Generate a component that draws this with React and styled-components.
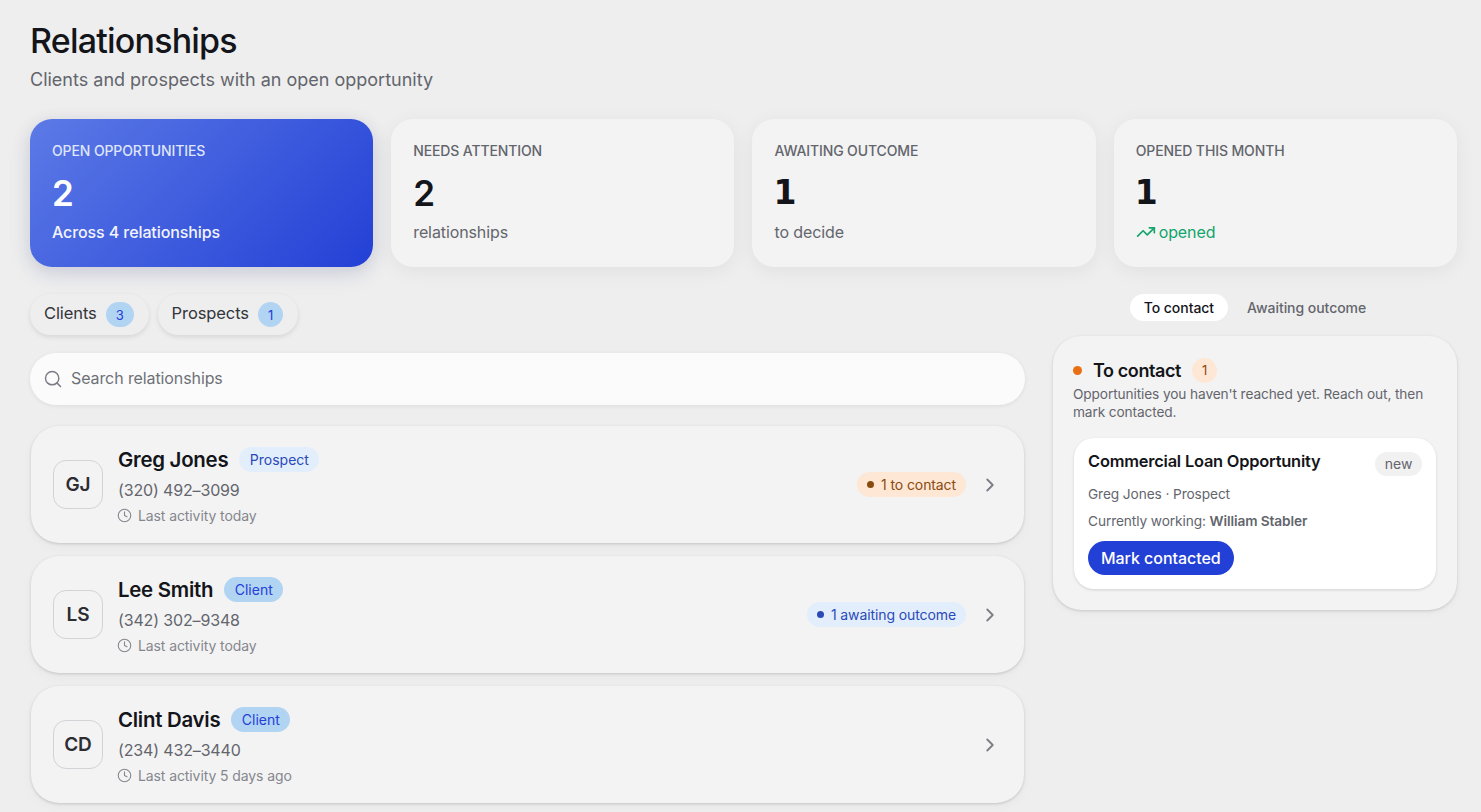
import React from 'react';
import styled, { createGlobalStyle } from 'styled-components';
import { Search, Clock, ChevronRight, TrendingUp } from 'lucide-react';

const summary = [
  { label: 'OPEN OPPORTUNITIES', value: '2', note: 'Across 4 relationships', primary: true },
  { label: 'NEEDS ATTENTION', value: '2', note: 'relationships' },
  { label: 'AWAITING OUTCOME', value: '1', note: 'to decide' },
  { label: 'OPENED THIS MONTH', value: '1', note: 'opened', trend: true },
];

const people = [
  { initials: 'GJ', name: 'Greg Jones', kind: 'Prospect', phone: '(320) 492–3099', activity: 'Last activity today', status: '1 to contact', tone: 'orange' },
  { initials: 'LS', name: 'Lee Smith', kind: 'Client', phone: '(342) 302–9348', activity: 'Last activity today', status: '1 awaiting outcome', tone: 'blue' },
  { initials: 'CD', name: 'Clint Davis', kind: 'Client', phone: '(234) 432–3440', activity: 'Last activity 5 days ago' },
];

const App = () => (
  <Page>
    <GlobalStyle />
    <Title>Relationships</Title>
    <Subtitle>Clients and prospects with an open opportunity</Subtitle>

    <SummaryGrid>
      {summary.map((item) => (
        <SummaryCard key={item.label} $primary={item.primary}>
          <SummaryLabel $primary={item.primary}>{item.label}</SummaryLabel>
          <SummaryValue $primary={item.primary} $footed={item.value === '1'}>{item.value}</SummaryValue>
          <SummaryNote $primary={item.primary} $trend={item.trend}>
            {item.trend && <TrendingUp size={20} strokeWidth={2} />}
            {item.note}
          </SummaryNote>
        </SummaryCard>
      ))}
    </SummaryGrid>

    <Columns>
      <LeftColumn>
        <FilterRow>
          <FilterPill><FilterLabel>Clients</FilterLabel><FilterCount>3</FilterCount></FilterPill>
          <FilterPill><FilterLabel>Prospects</FilterLabel><FilterCount>1</FilterCount></FilterPill>
        </FilterRow>
        <SearchBar>
          <Search size={20} strokeWidth={1.75} color="#7b7d85" />
          <SearchInput placeholder="Search relationships" />
        </SearchBar>
        <RowList>
          {people.map((person) => (
            <PersonRow key={person.name}>
              <Avatar>{person.initials}</Avatar>
              <PersonInfo>
                <NameLine>
                  <PersonName>{person.name}</PersonName>
                  <KindChip $client={person.kind === 'Client'}>{person.kind}</KindChip>
                </NameLine>
                <Phone>{person.phone}</Phone>
                <Activity>
                  <Clock size={15} strokeWidth={1.75} />
                  {person.activity}
                </Activity>
              </PersonInfo>
              {person.status && (
                <StatusChip $tone={person.tone}>
                  <StatusDot $tone={person.tone} />
                  {person.status}
                </StatusChip>
              )}
              <RowChevron><ChevronRight size={22} strokeWidth={2} /></RowChevron>
            </PersonRow>
          ))}
        </RowList>
      </LeftColumn>

      <RightColumn>
        <TabRow>
          <Tab $active>To contact</Tab>
          <Tab>Awaiting outcome</Tab>
        </TabRow>
        <Panel>
          <PanelHeader>
            <PanelDot />
            <PanelTitle>To contact</PanelTitle>
            <PanelCount>1</PanelCount>
          </PanelHeader>
          <PanelText>Opportunities you haven't reached yet. Reach out, then mark contacted.</PanelText>
          <OpportunityCard>
            <OpportunityTop>
              <OpportunityTitle>Commercial Loan Opportunity</OpportunityTitle>
              <NewChip>new</NewChip>
            </OpportunityTop>
            <OpportunityMeta>Greg Jones · Prospect</OpportunityMeta>
            <OpportunityMeta>Currently working: <strong>William Stabler</strong></OpportunityMeta>
            <MarkButton>Mark contacted</MarkButton>
          </OpportunityCard>
        </Panel>
      </RightColumn>
    </Columns>
  </Page>
);

const GlobalStyle = createGlobalStyle`
  * { box-sizing: border-box; }
  html, body { margin: 0; height: 100%; overflow: hidden; background: #eeeeee; }
  body { font-family: Inter, "Liberation Sans", sans-serif; color: #14151a; }
`;

const Page = styled.div`
  padding: 21px 24.1px 0 30px;
`;

const Title = styled.h1`
  margin: 0;
  font-size: 34px;
  line-height: 39px;
  font-weight: 500;
  letter-spacing: -0.8px;
  color: #14151a;
`;

const Subtitle = styled.p`
  margin: 8px 0 0;
  font-size: 18px;
  line-height: 24px;
  color: #63656d;
`;

const SummaryGrid = styled.div`
  display: grid;
  grid-template-columns: repeat(4, 1fr);
  gap: 18px;
  margin-top: 27px;
`;

const SummaryCard = styled.div`
  height: 148px;
  padding: 23px 22px;
  border-radius: 22px;
  background: ${(p) => (p.$primary ? 'linear-gradient(135deg, #5c7ae6 0%, #2340d6 100%)' : '#f3f3f3')};
  box-shadow: ${(p) => (p.$primary ? '0 8px 24px rgba(35, 64, 214, 0.08), 0 4px 18px rgba(0, 0, 0, 0.1)' : '0 4px 20px rgba(0, 0, 0, 0.06)')};
`;

const SummaryLabel = styled.div`
  font-size: 14px;
  line-height: 18px;
  font-weight: 500;
  letter-spacing: -0.12px;
  color: ${(p) => (p.$primary ? '#dfe5fb' : '#63656d')};
`;

const SummaryValue = styled.div`
  margin-top: 12px;
  margin-left: ${(p) => (p.$footed ? '-1px' : '0')};
  font-family: ${(p) => (p.$footed ? '"DejaVu Sans", sans-serif' : 'inherit')};
  font-size: ${(p) => (p.$footed ? '33px' : '35px')};
  line-height: 42px;
  font-weight: ${(p) => (p.$footed ? 700 : 600)};
  color: ${(p) => (p.$primary ? '#ffffff' : '#14151a')};
`;

const SummaryNote = styled.div`
  display: flex;
  align-items: center;
  gap: 3px;
  margin-top: 7px;
  font-size: 16px;
  line-height: 22px;
  font-weight: ${(p) => (p.$primary ? 500 : 400)};
  letter-spacing: -0.1px;
  color: ${(p) => (p.$primary ? '#f2f4fe' : p.$trend ? '#12a56c' : '#63656d')};
`;

const Columns = styled.div`
  display: grid;
  grid-template-columns: 995px 1fr;
  gap: 28px;
  margin-top: 27px;
  align-items: start;
`;

const LeftColumn = styled.div`
  display: flex;
  flex-direction: column;
`;

const FilterRow = styled.div`
  display: flex;
  gap: 9px;
`;

const FilterPill = styled.div`
  display: flex;
  align-items: center;
  gap: 9px;
  height: 41px;
  padding: 0 15px 0 14px;
  border-radius: 21px;
  background: #eeeeee;
  font-size: 16.5px;
  letter-spacing: -0.1px;
  color: #33353b;
  box-shadow: 0 2px 5px rgba(0, 0, 0, 0.1);
`;

const FilterLabel = styled.span`
  padding-bottom: 3px;
`;

const FilterCount = styled.span`
  display: flex;
  align-items: center;
  justify-content: center;
  min-width: 25px;
  height: 25px;
  padding: 0 10px;
  border-radius: 13px;
  background: #b2d4f3;
  font-size: 13px;
  color: #2340d6;
`;

const SearchBar = styled.div`
  display: flex;
  align-items: center;
  gap: 8px;
  height: 52px;
  margin-top: 18px;
  padding: 0 13px;
  border-radius: 26px;
  background: #fbfbfb;
  box-shadow: 0 1px 4px rgba(0, 0, 0, 0.08);
`;

const SearchInput = styled.input`
  flex: 1;
  border: none;
  outline: none;
  background: transparent;
  padding: 0 0 2px;
  font: inherit;
  font-size: 16px;
  letter-spacing: -0.1px;
  color: #14151a;
  &::placeholder { color: #6f7178; opacity: 1; }
`;

const RowList = styled.div`
  display: flex;
  flex-direction: column;
  gap: 13px;
  margin-top: 21px;
  padding: 0 1px;
`;

const PersonRow = styled.div`
  display: flex;
  align-items: center;
  height: 117px;
  padding: 0 23px 0 22px;
  border-radius: 28px;
  background: #f3f3f3;
  box-shadow: 0 1px 3px rgba(0, 0, 0, 0.16), 0 4px 12px rgba(0, 0, 0, 0.03);
`;

const Avatar = styled.div`
  display: flex;
  align-items: center;
  justify-content: center;
  width: 50px;
  height: 49px;
  flex-shrink: 0;
  border: 1px solid #d2d3d6;
  border-radius: 13px;
  font-size: 19px;
  font-weight: 600;
  color: #2b2d33;
`;

const PersonInfo = styled.div`
  flex: 1;
  margin-left: 15px;
  padding-top: 2.5px;
`;

const NameLine = styled.div`
  display: flex;
  align-items: center;
  gap: 11px;
`;

const PersonName = styled.div`
  font-size: 20.4px;
  line-height: 25px;
  font-weight: 600;
  letter-spacing: -0.25px;
  color: #14151a;
`;

const KindChip = styled.span`
  padding: 0 10.5px;
  height: 25px;
  line-height: 25px;
  border-radius: 13px;
  font-size: 14px;
  color: ${(p) => (p.$client ? '#2340d6' : '#2a4ab8')};
  background: ${(p) => (p.$client ? '#b2d4f3' : '#e3eefc')};
`;

const Phone = styled.div`
  margin-top: 7px;
  font-size: 16px;
  line-height: 22px;
  letter-spacing: -0.15px;
  color: #63656d;
`;

const Activity = styled.div`
  display: flex;
  align-items: center;
  gap: 6px;
  margin-top: 6px;
  margin-left: -1px;
  font-size: 14px;
  line-height: 18px;
  letter-spacing: -0.1px;
  color: #85878e;
`;

const StatusChip = styled.span`
  display: flex;
  align-items: center;
  gap: 7px;
  height: 25px;
  padding: 0 10px;
  border-radius: 13px;
  font-size: 14px;
  letter-spacing: -0.1px;
  color: ${(p) => (p.$tone === 'orange' ? '#8a4b10' : '#2a4ab8')};
  background: ${(p) => (p.$tone === 'orange' ? '#fee7d4' : '#e3eefc')};
`;

const StatusDot = styled.span`
  width: 7px;
  height: 7px;
  border-radius: 50%;
  background: ${(p) => (p.$tone === 'orange' ? '#8a4b10' : '#2a4ab8')};
`;

const RowChevron = styled.span`
  display: flex;
  margin-left: 13px;
  color: #7b7d85;
`;

const RightColumn = styled.div`
  display: flex;
  flex-direction: column;
  align-items: stretch;
`;

const TabRow = styled.div`
  display: flex;
  justify-content: center;
  gap: 6px;
  height: 27px;
`;

const Tab = styled.div`
  display: flex;
  align-items: center;
  height: 27px;
  padding: 0 13.5px;
  border-radius: 14px;
  font-size: 14px;
  font-weight: 500;
  letter-spacing: -0.05px;
  color: ${(p) => (p.$active ? '#14151a' : '#63656d')};
  background: ${(p) => (p.$active ? '#ffffff' : 'transparent')};
`;

const Panel = styled.div`
  margin-top: 15px;
  padding: 21px 21px 21px 20px;
  border-radius: 28px;
  background: #f3f3f3;
  box-shadow: 0 1px 3px rgba(0, 0, 0, 0.14), 0 3px 8px rgba(0, 0, 0, 0.03);
`;

const PanelHeader = styled.div`
  display: flex;
  align-items: center;
  height: 26px;
`;

const PanelDot = styled.span`
  width: 9px;
  height: 9px;
  border-radius: 50%;
  background: #ea6f12;
`;

const PanelTitle = styled.div`
  margin-left: 11px;
  font-size: 18px;
  font-weight: 600;
  letter-spacing: -0.4px;
  color: #14151a;
`;

const PanelCount = styled.span`
  display: flex;
  align-items: center;
  justify-content: center;
  width: 25px;
  height: 25px;
  margin-left: 11px;
  border-radius: 50%;
  background: #fee7d4;
  font-size: 13px;
  color: #8a4b10;
`;

const PanelText = styled.p`
  margin: 2px 0 0;
  font-size: 13.7px;
  line-height: 18px;
  letter-spacing: -0.12px;
  color: #63656d;
`;

const OpportunityCard = styled.div`
  margin-top: 17px;
  margin-left: 1px;
  padding: 14px 14px 14px;
  border-radius: 20px;
  background: #ffffff;
  box-shadow: 0 1px 3px rgba(0, 0, 0, 0.14);
`;

const OpportunityTop = styled.div`
  display: flex;
  justify-content: space-between;
  align-items: flex-start;
`;

const OpportunityTitle = styled.div`
  font-size: 16.4px;
  line-height: 18px;
  font-weight: 600;
  letter-spacing: -0.2px;
  color: #14151a;
`;

const NewChip = styled.span`
  height: 24px;
  line-height: 24px;
  padding: 0 9.5px;
  border-radius: 12px;
  background: #f1f1f2;
  font-size: 14px;
  color: #63656d;
`;

const OpportunityMeta = styled.div`
  margin-top: 9px;
  font-size: 13.7px;
  line-height: 19px;
  letter-spacing: -0.1px;
  color: #63656d;
  strong { font-weight: 600; }
  & + & { margin-top: 8px; }
`;

const MarkButton = styled.button`
  display: block;
  height: 34px;
  margin-top: 10px;
  padding: 0 13px;
  border: none;
  border-radius: 17px;
  background: #2340d6;
  font: inherit;
  font-size: 16px;
  font-weight: 500;
  letter-spacing: -0.05px;
  color: #ffffff;
`;

export default App;
